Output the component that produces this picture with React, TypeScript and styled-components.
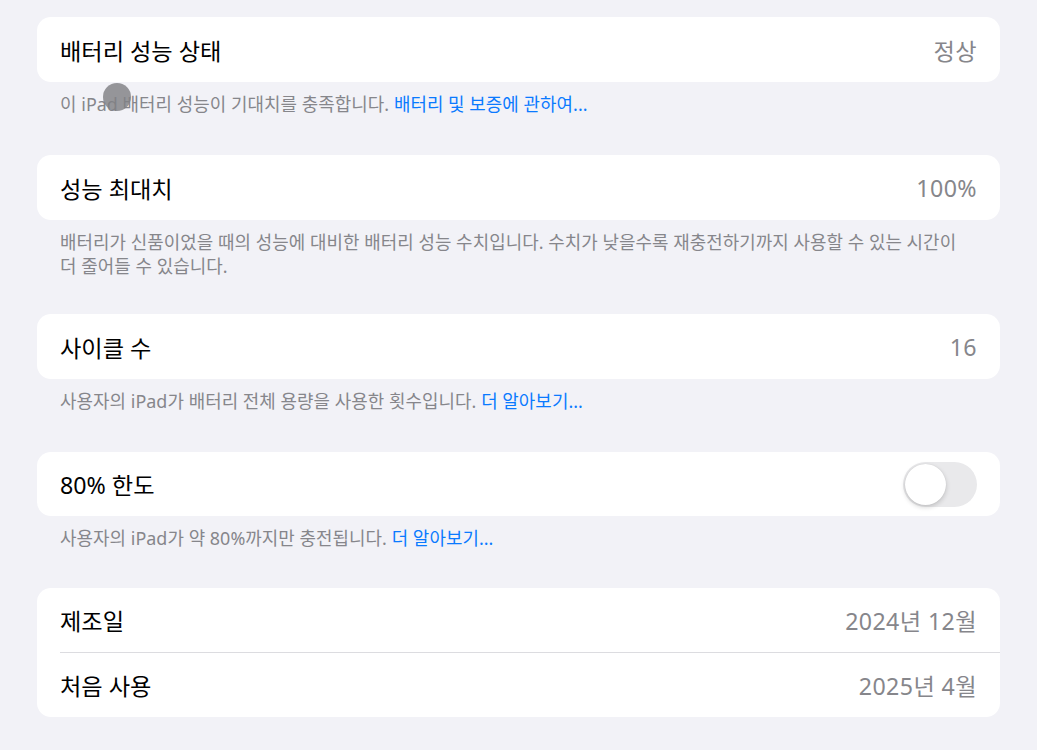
import React from "react";
import styled, { createGlobalStyle } from "styled-components";

const Global = createGlobalStyle`
  html, body { margin: 0; padding: 0; background: #f2f2f7; }
  body { font-family: "Noto Sans", "Noto Sans CJK KR", sans-serif; -webkit-font-smoothing: antialiased; }
`;

const Page = styled.div`
  position: relative;
  width: 1037px;
  height: 750px;
  overflow: hidden;
  box-sizing: border-box;
  padding: 17px 37px 0 37px;
  background: #f2f2f7;
  display: flex;
  flex-direction: column;
`;

const Section = styled.section`
  display: flex;
  flex-direction: column;
`;

const Card = styled.div`
  background: #ffffff;
  border-radius: 14px;
  overflow: hidden;
  display: flex;
  flex-direction: column;
`;

const Row = styled.div<{ $divider?: boolean }>`
  height: 64px;
  padding: 0 23px;
  display: flex;
  align-items: center;
  justify-content: space-between;
  position: relative;
  ${(p) =>
    p.$divider &&
    `&::after{content:"";position:absolute;left:23px;right:0;bottom:-1px;height:1.5px;background:#dcdce0;}`}
`;

const Label = styled.span`
  font-size: 23.2px;
  color: #000;
`;

const Value = styled.span`
  font-size: 23.2px;
  color: #86868b;
  letter-spacing: 0.4px;
`;

const Footer = styled.p<{ $bottom?: number }>`
  margin: 0;
  padding: 10px 23px ${(p) => p.$bottom ?? 40}px 23px;
  font-size: 17.9px;
  line-height: 24px;
  color: #86868b;
  letter-spacing: 0.05px;
  white-space: nowrap;
`;

const Link = styled.span`
  color: #0a7aff;
`;

const Toggle = styled.div`
  width: 74px;
  height: 45px;
  border-radius: 23px;
  background: #e9e9eb;
  position: relative;
  flex-shrink: 0;
`;

const Knob = styled.div`
  position: absolute;
  left: 2px;
  top: 2px;
  width: 41px;
  height: 41px;
  border-radius: 50%;
  background: #fff;
  box-shadow: 0 2px 5px rgba(0, 0, 0, 0.18), 0 0 1px rgba(0, 0, 0, 0.12);
`;

const Touch = styled.div`
  position: absolute;
  left: 103px;
  top: 83px;
  width: 28px;
  height: 28px;
  border-radius: 50%;
  background: rgba(128, 128, 132, 0.82);
  pointer-events: none;
`;

export default function App() {
  return (
    <>
      <Global />
      <Page>
        <Section>
          <Card>
            <Row style={{ height: 65 }}>
              <Label>배터리 성능 상태</Label>
              <Value>정상</Value>
            </Row>
          </Card>
          <Footer $bottom={39}>
            이 iPad 배터리 성능이 기대치를 충족합니다. <Link>배터리 및 보증에 관하여...</Link>
          </Footer>
        </Section>
        <Section>
          <Card>
            <Row style={{ height: 65 }}>
              <Label>성능 최대치</Label>
              <Value>100%</Value>
            </Row>
          </Card>
          <Footer $bottom={36}>
            배터리가 신품이었을 때의 성능에 대비한 배터리 성능 수치입니다. 수치가 낮을수록 재충전하기까지 사용할 수 있는 시간이
            <br />더 줄어들 수 있습니다.
          </Footer>
        </Section>
        <Section>
          <Card>
            <Row style={{ height: 65 }}>
              <Label>사이클 수</Label>
              <Value>16</Value>
            </Row>
          </Card>
          <Footer $bottom={39}>
            사용자의 iPad가 배터리 전체 용량을 사용한 횟수입니다. <Link>더 알아보기...</Link>
          </Footer>
        </Section>
        <Section>
          <Card>
            <Row>
              <Label>80% 한도</Label>
              <Toggle>
                <Knob />
              </Toggle>
            </Row>
          </Card>
          <Footer $bottom={38}>
            사용자의 iPad가 약 80%까지만 충전됩니다. <Link>더 알아보기...</Link>
          </Footer>
        </Section>
        <Section>
          <Card>
            <Row $divider>
              <Label>제조일</Label>
              <Value>2024년 12월</Value>
            </Row>
            <Row style={{ marginTop: 1 }}>
              <Label>처음 사용</Label>
              <Value>2025년 4월</Value>
            </Row>
          </Card>
        </Section>
        <Touch />
      </Page>
    </>
  );
}
